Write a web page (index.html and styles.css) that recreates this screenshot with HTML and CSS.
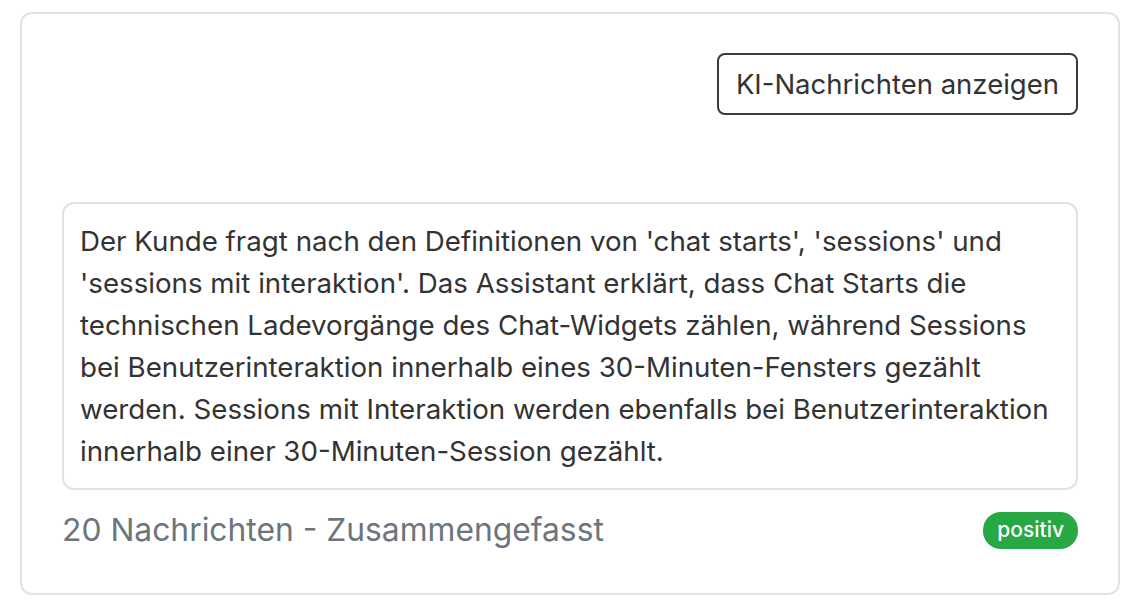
FILE: index.html
```html
<!DOCTYPE html>
<html lang="de">
<head>
<meta charset="UTF-8">
<meta name="viewport" content="width=device-width, initial-scale=1.0">
<title>Zusammenfassung</title>
<link rel="stylesheet" href="styles.css">
</head>
<body>
<div class="card">
  <div class="card-actions">
    <button class="btn-outline">KI-Nachrichten anzeigen</button>
  </div>
  <div class="summary">
    Der Kunde fragt nach den Definitionen von 'chat starts', 'sessions' und 'sessions mit interaktion'. Das Assistant erklärt, dass Chat Starts die technischen Ladevorgänge des Chat-Widgets zählen, während Sessions bei Benutzerinteraktion innerhalb eines 30-Minuten-Fensters gezählt werden. Sessions mit Interaktion werden ebenfalls bei Benutzerinteraktion innerhalb einer 30-Minuten-Session gezählt.
  </div>
  <div class="card-footer">
    <span class="meta">20 Nachrichten - Zusammengefasst</span>
    <span class="badge">positiv</span>
  </div>
</div>
</body>
</html>
```

FILE: styles.css
```css
body {
  font-family: Inter, "Noto Sans", sans-serif;
  margin: 0;
  padding: 12px 16px 0 20px;
  background-color: #fff;
  color: #333;
}
.card {
  box-sizing: border-box;
  width: 1100px;
  height: 583px;
  border: 2px solid #e2e2e2;
  border-radius: 12px;
  padding: 39px 40px 0 40px;
}
.card-actions {
  display: flex;
  justify-content: flex-end;
}
.btn-outline {
  font-family: inherit;
  font-size: 27.5px;
  color: #333;
  background: #fff;
  border: 2px solid #3a3a3a;
  border-radius: 8px;
  padding: 0 17px;
  height: 62px;
  cursor: pointer;
}
.summary {
  margin-top: 87px;
  border: 2px solid #e2e2e2;
  border-radius: 12px;
  padding: 16px;
  font-size: 27.7px;
  line-height: 42px;
}
.card-footer {
  display: flex;
  justify-content: space-between;
  align-items: center;
  margin-top: 20px;
}
.meta {
  font-size: 31.8px;
  line-height: 40px;
  color: #6c757d;
}
.badge {
  background-color: #28a745;
  color: #fff;
  font-size: 21px;
  font-weight: 500;
  line-height: 26px;
  padding: 5px 14px 6px;
  border-radius: 18px;
}
```
